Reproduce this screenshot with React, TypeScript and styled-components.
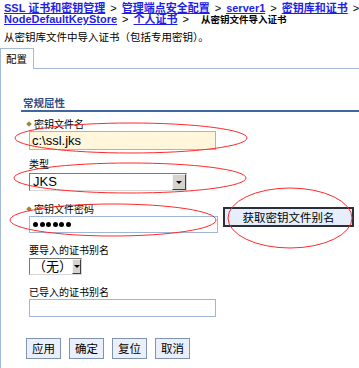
import React from 'react'
import styled, { createGlobalStyle } from 'styled-components'

const GlobalStyle = createGlobalStyle`
  html, body {
    margin: 0;
    padding: 0;
    background: #ffffff;
  }
  body {
    font-family: "Liberation Sans", "Noto Sans CJK SC", sans-serif;
    color: #000000;
  }
`

const Page = styled.div`
  position: relative;
  width: 359px;
  height: 368px;
  overflow: hidden;
  padding-top: 3px;
  box-sizing: border-box;
`

const CrumbLine = styled.div`
  height: 11px;
  padding-left: 4px;
  display: flex;
  align-items: center;
  white-space: nowrap;
  font-size: 10.5px;
  overflow: visible;
`

const Crumb = styled.a`
  color: #1f1fe6;
  font-weight: bold;
  text-decoration: underline;
  font-family: "Liberation Sans", "Noto Sans CJK SC", sans-serif;
  font-size: 11px;
  line-height: 11px;
  height: 11px;
`

const Sep = styled.span`
  color: #000;
  padding: 0 5px;
  font-size: 11px;
  line-height: 11px;
  height: 11px;
`

const Current = styled.span`
  font-weight: bold;
  font-family: "Noto Sans CJK SC", sans-serif;
  font-size: 9.5px;
  line-height: 11px;
  height: 11px;
  padding-left: 7px;
`

const Desc = styled.div`
  margin-top: 6px;
  padding-left: 4px;
  height: 12px;
  font-family: "Noto Sans CJK SC", sans-serif;
  font-size: 10.5px;
  line-height: 12px;
  white-space: nowrap;
`

const TabBar = styled.div`
  display: flex;
  margin-top: 5px;
  height: 21px;
`

const Tab = styled.div`
  width: 34px;
  border: 1px solid #a5b9d8;
  border-bottom: none;
  font-family: "Noto Sans CJK SC", sans-serif;
  font-size: 10.5px;
  line-height: 19px;
  padding-left: 5px;
  box-sizing: border-box;
`

const TabRest = styled.div`
  flex: 1;
  border-bottom: 1px solid #a5b9d8;
`

const Panel = styled.div`
  border-left: 1px solid #a5b9d8;
  padding: 28px 0 0 20px;
  height: 320px;
  box-sizing: border-box;
`

const SectionTitle = styled.div`
  font-family: "Noto Sans CJK SC", sans-serif;
  font-weight: bold;
  font-size: 10.5px;
  line-height: 12px;
  height: 12px;
  color: #2f4f86;
  padding-left: 2px;
  padding-bottom: 1px;
  border-bottom: 2px solid #41659e;
`

const Field = styled.div<{ $top: number }>`
  margin-top: ${(p) => p.$top}px;
  padding-left: 8px;
`

const Label = styled.div`
  font-family: "Noto Sans CJK SC", sans-serif;
  font-size: 10px;
  line-height: 12px;
  height: 12px;
  display: flex;
  align-items: center;
  white-space: nowrap;
`

const Bullet = styled.span`
  width: 4px;
  height: 4px;
  margin: 0 3px 0 -2px;
  background: #9a8a3a;
  transform: rotate(45deg);
`

const TextBox = styled.div<{ $w: number; $h: number; $bg?: string; $top: number }>`
  margin-top: ${(p) => p.$top}px;
  width: ${(p) => p.$w}px;
  height: ${(p) => p.$h}px;
  border: 1px solid #9fb6d8;
  background: ${(p) => p.$bg || '#ffffff'};
  box-sizing: border-box;
  font-family: "Liberation Sans", sans-serif;
  font-size: 13px;
  line-height: ${(p) => p.$h - 2}px;
  padding-left: 2px;
  white-space: nowrap;
  display: flex;
  align-items: center;
`

const Dots = styled.div`
  display: flex;
  gap: 1.5px;
  padding-left: 1px;
`

const Dot = styled.span`
  width: 5px;
  height: 5px;
  border-radius: 50%;
  background: #000;
`

const Select = styled.div<{ $w: number; $h: number; $top: number }>`
  margin-top: ${(p) => p.$top}px;
  width: ${(p) => p.$w}px;
  height: ${(p) => p.$h}px;
  display: flex;
  box-sizing: border-box;
  border: 1px solid #7a7a7a;
  border-right-color: #d8d8d8;
  border-bottom-color: #d8d8d8;
  background: #ffffff;
`

const SelectText = styled.div`
  flex: 1;
  font-family: "Liberation Sans", "Noto Sans CJK SC", sans-serif;
  font-size: 13px;
  line-height: 15px;
  padding-left: 3px;
  white-space: nowrap;
`

const Arrow = styled.div`
  width: 14px;
  background: #d6d3ce;
  border-left: 1px solid #f4f4f4;
  border-top: 1px solid #f4f4f4;
  border-right: 1px solid #404040;
  border-bottom: 1px solid #404040;
  box-sizing: border-box;
  display: flex;
  align-items: center;
  justify-content: center;
  &::after {
    content: '';
    border-left: 3px solid transparent;
    border-right: 3px solid transparent;
    border-top: 3px solid #000;
  }
`

const PwRow = styled.div`
  display: flex;
  align-items: flex-start;
  gap: 5px;
`

const AliasButton = styled.button`
  margin-top: 4px;
  width: 131px;
  height: 20px;
  border: 2px solid #2a2f3a;
  background: #e6eefc;
  font-family: "Noto Sans CJK SC", sans-serif;
  font-size: 11.5px;
  line-height: 14px;
  padding: 0;
  color: #000;
`

const Actions = styled.div`
  display: flex;
  gap: 8px;
  margin-top: 21px;
  padding-left: 5px;
`

const ActionButton = styled.button`
  height: 21px;
  padding: 0 5px;
  border: 1px solid #7f93b0;
  background: #e9effb;
  font-family: "Noto Sans CJK SC", sans-serif;
  font-size: 11.5px;
  line-height: 17px;
  color: #000;
`

const Marks = styled.svg`
  position: absolute;
  left: 0;
  top: 0;
  pointer-events: none;
`

const marks = [
  { cx: 131, cy: 138, rx: 116, ry: 15 },
  { cx: 130, cy: 178, rx: 116, ry: 15 },
  { cx: 113, cy: 220, rx: 103, ry: 16 },
  { cx: 290, cy: 218, rx: 62, ry: 30 },
]

export default function App() {
  return (
    <Page>
      <GlobalStyle />
      <CrumbLine>
        <Crumb>SSL 证书和密钥管理</Crumb>
        <Sep>&gt;</Sep>
        <Crumb>管理端点安全配置</Crumb>
        <Sep>&gt;</Sep>
        <Crumb>server1</Crumb>
        <Sep>&gt;</Sep>
        <Crumb>密钥库和证书</Crumb>
        <Sep>&gt;</Sep>
      </CrumbLine>
      <CrumbLine>
        <Crumb>NodeDefaultKeyStore</Crumb>
        <Sep>&gt;</Sep>
        <Crumb>个人证书</Crumb>
        <Sep>&gt;</Sep>
        <Current>从密钥文件导入证书</Current>
      </CrumbLine>
      <Desc>从密钥库文件中导入证书（包括专用密钥）。</Desc>
      <TabBar>
        <Tab>配置</Tab>
        <TabRest />
      </TabBar>
      <Panel>
        <SectionTitle>常规屈性</SectionTitle>
        <Field $top={6}>
          <Label>
            <Bullet />
            密钥文件名
          </Label>
          <TextBox $top={1} $w={187} $h={19} $bg="#fff6dc">
            c:\ssl.jks
          </TextBox>
        </Field>
        <Field $top={8}>
          <Label>类型</Label>
          <Select $top={3} $w={158} $h={18}>
            <SelectText>JKS</SelectText>
            <Arrow />
          </Select>
        </Field>
        <Field $top={12}>
          <PwRow>
            <div>
              <Label>
                <Bullet />
                密钥文件密码
              </Label>
              <TextBox $top={1} $w={189} $h={17}>
                <Dots>
                  {Array.from({ length: 6 }).map((_, i) => (
                    <Dot key={i} />
                  ))}
                </Dots>
              </TextBox>
            </div>
            <AliasButton>获取密钥文件别名</AliasButton>
          </PwRow>
        </Field>
        <Field $top={11}>
          <Label>要导入的证书别名</Label>
          <Select $top={2} $w={53} $h={17}>
            <SelectText>（无）</SelectText>
            <Arrow />
          </Select>
        </Field>
        <Field $top={11}>
          <Label>已导入的证书别名</Label>
          <TextBox $top={1} $w={187} $h={18} />
        </Field>
        <Actions>
          <ActionButton>应用</ActionButton>
          <ActionButton>确定</ActionButton>
          <ActionButton>复位</ActionButton>
          <ActionButton>取消</ActionButton>
        </Actions>
      </Panel>
      <Marks width={359} height={368}>
        {marks.map((m, i) => (
          <ellipse key={i} cx={m.cx} cy={m.cy} rx={m.rx} ry={m.ry} fill="none" stroke="#ff2a2a" strokeWidth={1} />
        ))}
      </Marks>
    </Page>
  )
}
